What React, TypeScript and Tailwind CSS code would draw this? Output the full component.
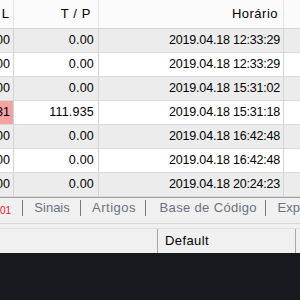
import React from "react";

const rows = [
  { sl: "00", tp: "0.00", t: "2019.04.18 12:33:29", pink: false },
  { sl: "00", tp: "0.00", t: "2019.04.18 12:33:29", pink: false },
  { sl: "00", tp: "0.00", t: "2019.04.18 15:31:02", pink: false },
  { sl: "31", tp: "111.935", t: "2019.04.18 15:31:18", pink: true },
  { sl: "00", tp: "0.00", t: "2019.04.18 16:42:48", pink: false },
  { sl: "00", tp: "0.00", t: "2019.04.18 16:42:48", pink: false },
  { sl: "00", tp: "0.00", t: "2019.04.18 20:24:23", pink: false },
];

export default function App() {
  return (
    <div
      className="w-[300px] h-[300px] overflow-hidden flex flex-col bg-[#f0f0f0] text-black"
      style={{ fontFamily: '"Liberation Sans", Arial, sans-serif' }}
    >
      {/* header */}
      <div className="grid grid-cols-[14px_85px_185px_1fr] h-[29px] bg-[#fbfbfb] border-b border-[#d5d5d5] text-[13px] shrink-0">
        <div className="flex items-center justify-end pr-[4px] border-r border-[#e3e3e3] overflow-hidden">L</div>
        <div className="flex items-center justify-end pr-[7px] border-r border-[#e3e3e3] tracking-[0.6px]">T / P</div>
        <div className="flex items-center justify-end pr-[5px] border-r border-[#e3e3e3] tracking-[0.5px]">Horário</div>
        <div />
      </div>
      {/* rows */}
      {rows.map((r, i) => {
        const bg = i % 2 === 0 ? "bg-[#ececec]" : "bg-white";
        return (
          <div
            key={i}
            className={`grid grid-cols-[14px_85px_185px_1fr] h-[24px] border-b border-[#dadada] text-[12.5px] shrink-0 ${bg}`}
          >
            <div
              className={`flex items-center justify-end pr-[3px] border-r border-[#d4d4d4] overflow-hidden whitespace-nowrap ${
                r.pink ? "bg-[#f5a2a2]" : ""
              }`}
            >
              {r.sl}
            </div>
            <div className="flex items-center justify-end pr-[4px] border-r border-[#d4d4d4] tracking-[0.2px]">{r.tp}</div>
            <div className="flex items-center justify-end pr-[3px] border-r border-[#d4d4d4] whitespace-nowrap tracking-[-0.2px]">{r.t}</div>
            <div />
          </div>
        );
      })}
      <div className="h-[1px] bg-[#a0a0a0] shrink-0" />
      {/* tab bar */}
      <div className="h-[26px] flex items-center pb-[5px] bg-[#f0f0f0] text-[13px] text-[#6b7080] whitespace-nowrap shrink-0 border-b border-[#d8d8d8]">
        <span className="text-[10px] text-[#f0102a] w-[23px] pt-[4px]">01</span>
        <span className="w-[1px] h-[16px] bg-[#7a7a7a]" />
        <span className="ml-[11px] w-[47px]">Sinais</span>
        <span className="w-[1px] h-[16px] bg-[#7a7a7a]" />
        <span className="ml-[11px] w-[54px] tracking-[0.5px]">Artigos</span>
        <span className="w-[1px] h-[16px] bg-[#7a7a7a]" />
        <span className="ml-[14px] w-[108px] tracking-[0.35px]">Base de Código</span>
        <span className="w-[1px] h-[16px] bg-[#7a7a7a]" />
        <span className="ml-[12px]">Exp</span>
      </div>
      <div className="h-[5px] bg-[#f0f0f0] border-b border-[#e0e0e0] shrink-0" />
      {/* status bar */}
      <div className="h-[24px] flex items-stretch bg-[#f0f0f0] text-[13px] shrink-0">
        <div className="w-[158px] border-r border-[#a8a8a8]" />
        <div className="w-[138px] flex items-center pl-[7px] border-r border-[#a8a8a8] tracking-[0.4px]">Default</div>
        <div className="flex-1" />
      </div>
      <div className="flex-1 bg-[#161a1f]" />
    </div>
  );
}
